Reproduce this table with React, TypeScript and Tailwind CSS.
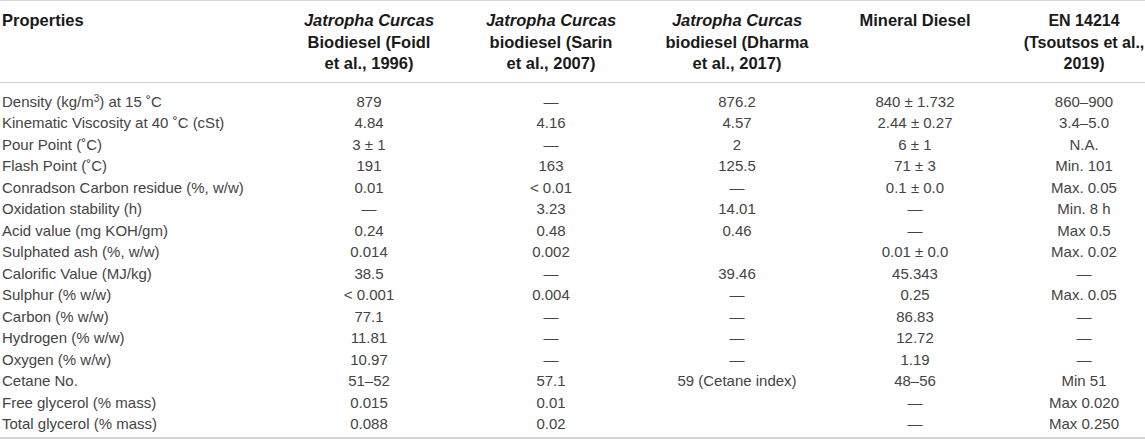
import React from "react";

const rows: (string | React.ReactNode)[][] = [
  [<>Density (kg/m<sup className="text-[10px]">3</sup>) at 15 ˚C</>, "879", "—", "876.2", "840 ± 1.732", "860–900"],
  ["Kinematic Viscosity at 40 ˚C (cSt)", "4.84", "4.16", "4.57", "2.44 ± 0.27", "3.4–5.0"],
  ["Pour Point (˚C)", "3 ± 1", "—", "2", "6 ± 1", "N.A."],
  ["Flash Point (˚C)", "191", "163", "125.5", "71 ± 3", "Min. 101"],
  ["Conradson Carbon residue (%, w/w)", "0.01", "< 0.01", "—", "0.1 ± 0.0", "Max. 0.05"],
  ["Oxidation stability (h)", "—", "3.23", "14.01", "—", "Min. 8 h"],
  ["Acid value (mg KOH/gm)", "0.24", "0.48", "0.46", "—", "Max 0.5"],
  ["Sulphated ash (%, w/w)", "0.014", "0.002", "", "0.01 ± 0.0", "Max. 0.02"],
  ["Calorific Value (MJ/kg)", "38.5", "—", "39.46", "45.343", "—"],
  ["Sulphur (% w/w)", "< 0.001", "0.004", "—", "0.25", "Max. 0.05"],
  ["Carbon (% w/w)", "77.1", "—", "—", "86.83", "—"],
  ["Hydrogen (% w/w)", "11.81", "—", "—", "12.72", "—"],
  ["Oxygen (% w/w)", "10.97", "—", "—", "1.19", "—"],
  ["Cetane No.", "51–52", "57.1", "59 (Cetane index)", "48–56", "Min 51"],
  ["Free glycerol (% mass)", "0.015", "0.01", "", "—", "Max 0.020"],
  ["Total glycerol (% mass)", "0.088", "0.02", "", "—", "Max 0.250"],
];

const cols = "grid grid-cols-[277px_184px_180px_192px_164px_174px]";

export default function App() {
  return (
    <div
      className="w-[1145px] h-[444px] overflow-hidden bg-white"
      style={{ fontFamily: '"Liberation Sans", Arial, sans-serif' }}
    >
      <div className="w-[1171px]">
        <div className={`${cols} border-t border-b border-[#d4d4d4] pt-[9px] pb-[7px] text-[16.5px] leading-[21.5px] font-bold text-[#1a1a1a]`}>
          <div className="pl-[2px]">Properties</div>
          <div className="text-center whitespace-nowrap">
            <i>Jatropha Curcas</i>
            <br />
            Biodiesel (Foidl
            <br />
            et al., 1996)
          </div>
          <div className="text-center whitespace-nowrap">
            <i>Jatropha Curcas</i>
            <br />
            biodiesel (Sarin
            <br />
            et al., 2007)
          </div>
          <div className="text-center whitespace-nowrap">
            <i>Jatropha Curcas</i>
            <br />
            biodiesel (Dharma
            <br />
            et al., 2017)
          </div>
          <div className="text-center whitespace-nowrap">Mineral Diesel</div>
          <div className="text-center whitespace-nowrap text-[16px]">
            EN 14214
            <br />
            (Tsoutsos et al.,
            <br />
            2019)
          </div>
        </div>
        <div className="pt-[8px] pb-[2px] border-b-2 border-[#d4d4d4] text-[15px] leading-[21.5px] text-[#444]">
          {rows.map((r, i) => (
            <div key={i} className={cols}>
              {r.map((c, j) => (
                <div
                  key={j}
                  className={j === 0 ? "pl-[2px] whitespace-nowrap" : "text-center whitespace-nowrap"}
                >
                  {c}
                </div>
              ))}
            </div>
          ))}
        </div>
      </div>
    </div>
  );
}
